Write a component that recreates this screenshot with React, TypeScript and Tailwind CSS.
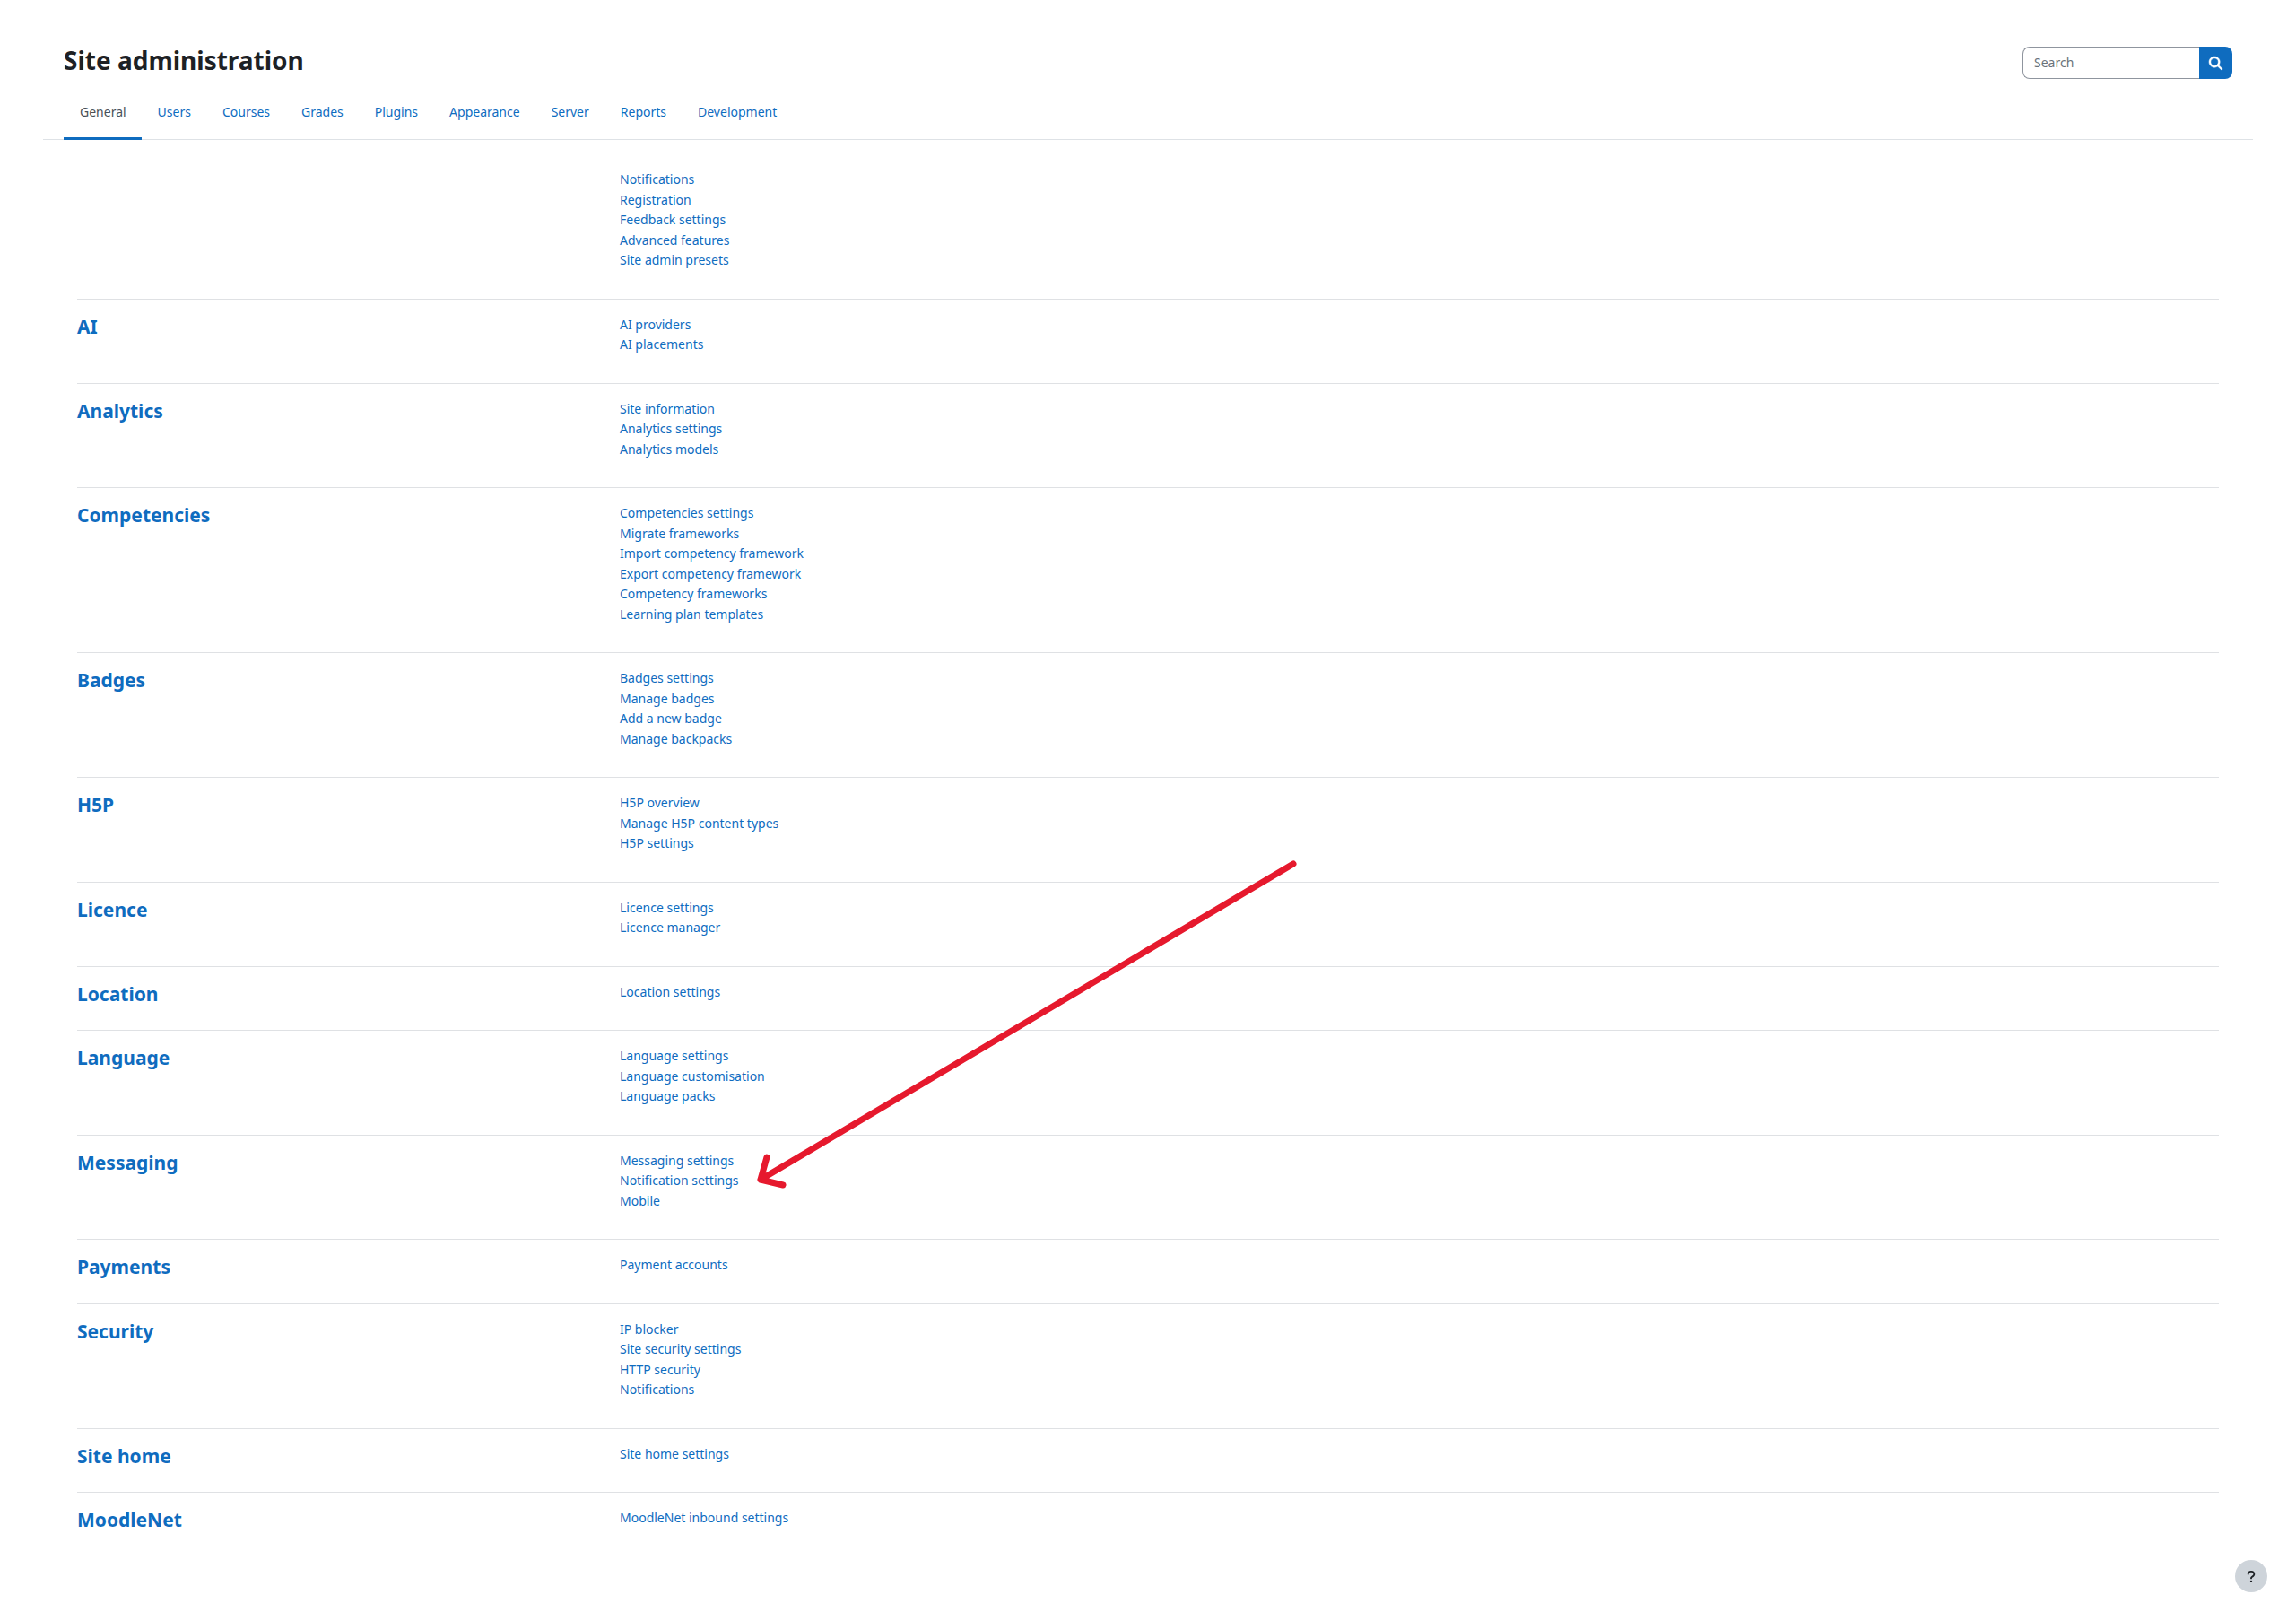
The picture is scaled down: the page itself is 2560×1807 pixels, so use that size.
const tabs = ["General", "Users", "Courses", "Grades", "Plugins", "Appearance", "Server", "Reports", "Development"];

const sections: { title: string; links: string[] }[] = [
  { title: "", links: ["Notifications", "Registration", "Feedback settings", "Advanced features", "Site admin presets"] },
  { title: "AI", links: ["AI providers", "AI placements"] },
  { title: "Analytics", links: ["Site information", "Analytics settings", "Analytics models"] },
  {
    title: "Competencies",
    links: [
      "Competencies settings",
      "Migrate frameworks",
      "Import competency framework",
      "Export competency framework",
      "Competency frameworks",
      "Learning plan templates",
    ],
  },
  { title: "Badges", links: ["Badges settings", "Manage badges", "Add a new badge", "Manage backpacks"] },
  { title: "H5P", links: ["H5P overview", "Manage H5P content types", "H5P settings"] },
  { title: "Licence", links: ["Licence settings", "Licence manager"] },
  { title: "Location", links: ["Location settings"] },
  { title: "Language", links: ["Language settings", "Language customisation", "Language packs"] },
  { title: "Messaging", links: ["Messaging settings", "Notification settings", "Mobile"] },
  { title: "Payments", links: ["Payment accounts"] },
  { title: "Security", links: ["IP blocker", "Site security settings", "HTTP security", "Notifications"] },
  { title: "Site home", links: ["Site home settings"] },
  { title: "MoodleNet", links: ["MoodleNet inbound settings"] },
];

function SearchIcon() {
  return (
    <svg viewBox="0 0 512 512" className="size-[15px]" fill="currentColor" stroke="currentColor" strokeWidth="16" overflow="visible" aria-hidden="true">
      <path d="M416 208c0 45.900-14.900 88.300-40 122.700L502.600 457.400c12.500 12.500 12.500 32.800 0 45.300s-32.800 12.500-45.300 0L330.700 376c-34.400 25.200-76.800 40-122.700 40C93.100 416 0 322.900 0 208S93.100 0 208 0S416 93.100 416 208zM208 352a144 144 0 1 0 0-288 144 144 0 1 0 0 288z" />
    </svg>
  );
}

function Header() {
  return (
    <header className="flex items-start justify-between px-[23px] pt-[52px]">
      <h1 className="-mt-px text-[28px] leading-8 font-bold text-[#1d2125]">Site administration</h1>
      <form className="flex h-9 w-[234px]" role="search" onSubmit={(e) => e.preventDefault()}>
        <input
          type="text"
          aria-label="Search"
          placeholder="Search"
          className="min-w-0 flex-1 rounded-l-lg border border-r-0 border-[#8f959e] bg-white px-3 text-sm text-[#1d2125] placeholder:text-[#6a737b]"
        />
        <button type="submit" aria-label="Search" className="flex w-[37px] items-center justify-center rounded-r-lg bg-[#0f6cbf] text-white">
          <SearchIcon />
        </button>
      </form>
    </header>
  );
}

function Tabs() {
  return (
    <nav aria-label="Administration" className="mt-3 flex h-14 border-b border-[#dee2e6] px-[23px]">
      {tabs.map((tab, i) => (
        <a
          key={tab}
          href="#"
          aria-current={i === 0 ? "page" : undefined}
          className={
            i === 0
              ? "-mb-px border-b-3 border-[#0f6cbf] pt-[15px] pr-[17px] pl-[18px] text-sm text-[#495057]"
              : "pt-[15px] pr-[17px] pl-[18px] text-sm text-[#0f6cbf] hover:underline"
          }
        >
          {tab}
        </a>
      ))}
    </nav>
  );
}

function Arrow() {
  return (
    <svg
      className="pointer-events-none absolute top-[950px] left-[840px] h-[380px] w-[612px]"
      viewBox="840 950 612 380"
      fill="none"
      stroke="#e6192d"
      strokeWidth="7"
      strokeLinecap="round"
      strokeLinejoin="round"
      aria-hidden="true"
    >
      <path d="M1442 963L848 1315M855 1290L848 1315L873 1321" />
    </svg>
  );
}

export default function App() {
  return (
    <div className="relative min-h-screen bg-white px-12 font-['Noto_Sans','Open_Sans',sans-serif]">
      <Header />
      <Tabs />
      <main className="px-[38px] pt-4">
        {sections.map((section, i) => (
          <section
            key={section.title}
            className={
              i === 0
                ? "grid grid-cols-4 gap-8 pt-4 pb-8"
                : "grid grid-cols-4 gap-8 border-t border-[#dfe1e4] pt-4 pb-8"
            }
          >
            <div>
              {section.title && (
                <h2 className="-mb-2 text-[21px] leading-7 font-bold">
                  <a href="#" className="text-[#0f6cbf] hover:underline">{section.title}</a>
                </h2>
              )}
            </div>
            <ul className="col-span-3 text-[15px] leading-normal">
              {section.links.map((link) => (
                <li key={link}>
                  <a href="#" className="text-[14px] text-[#0f6cbf] hover:underline">{link}</a>
                </li>
              ))}
            </ul>
          </section>
        ))}
      </main>
      <Arrow />
      <button
        type="button"
        aria-label="Help"
        className="fixed right-8 bottom-8 flex size-9 items-center justify-center rounded-full bg-[#ced4da] text-[#1d2125]"
      >
        <svg viewBox="0 0 320 512" className="h-[15px] w-2.5" fill="currentColor" aria-hidden="true">
          <path d="M80 160c0-35.300 28.700-64 64-64h32c35.300 0 64 28.700 64 64v3.600c0 21.800-11.100 42.100-29.400 53.800l-42.200 27.100c-25.200 16.200-40.400 44.100-40.400 74V320c0 17.700 14.300 32 32 32s32-14.300 32-32v-1.400c0-8.200 4.200-15.800 11-20.200l42.200-27.100c36.600-23.600 58.800-64.100 58.800-107.700V160c0-70.700-57.300-128-128-128H144C73.300 32 16 89.300 16 160c0 17.700 14.300 32 32 32s32-14.300 32-32zm80 320a40 40 0 1 0 0-80 40 40 0 1 0 0 80z" />
        </svg>
      </button>
    </div>
  );
}
